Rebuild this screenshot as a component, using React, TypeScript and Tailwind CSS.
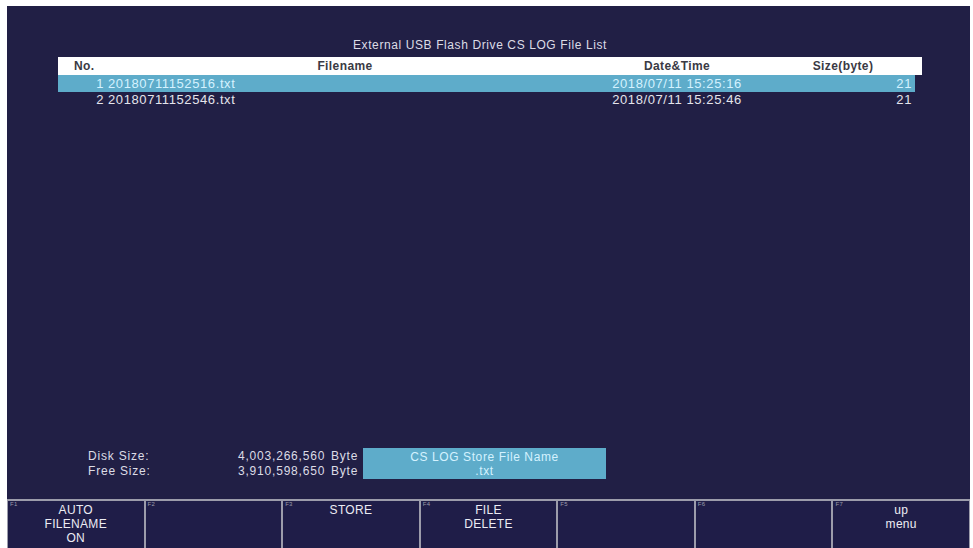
const files = [
  { no: 1, name: "20180711152516.txt", date: "2018/07/11 15:25:16", size: 21, selected: true },
  { no: 2, name: "20180711152546.txt", date: "2018/07/11 15:25:46", size: 21, selected: false },
];

const keys = [
  { f: "F1", label: ["AUTO", "FILENAME", "ON"] },
  { f: "F2", label: [] },
  { f: "F3", label: ["STORE"] },
  { f: "F4", label: ["FILE", "DELETE"] },
  { f: "F5", label: [] },
  { f: "F6", label: [] },
  { f: "F7", label: ["up", "menu"] },
];

function FileTable() {
  return (
    <div className="ml-[51px] w-[864px]">
      <div className="flex h-[18px] items-center bg-white text-[12px] font-bold tracking-[0.4px] text-[#3a3a44]">
        <div className="w-[80px] pl-[16px]">No.</div>
        <div className="w-[414px] text-center">Filename</div>
        <div className="w-[250px] text-center">Date&amp;Time</div>
        <div className="w-[82px] text-center">Size(byte)</div>
      </div>
      {files.map((f) => (
        <div
          key={f.no}
          className={
            f.selected
              ? "flex h-[17px] w-[857px] items-center bg-[#5eacca] text-[13px] tracking-[0.6px] text-[#d4f2ff]"
              : "flex h-[16px] w-[857px] items-center text-[13px] tracking-[0.6px] text-[#e4e4ec]"
          }
        >
          <div className="w-[46px] text-right">{f.no}</div>
          <div className="w-[448px] pl-[4px]">{f.name}</div>
          <div className="w-[250px] text-center">{f.date}</div>
          <div className="flex-1 pr-[3px] text-right">{f.size}</div>
        </div>
      ))}
    </div>
  );
}

function DiskInfo() {
  return (
    <div className="flex h-[31px] items-center text-[12px] tracking-[0.8px] text-[#dcdce6]">
      <div className="ml-[81px] flex w-[150px] flex-col leading-[15px]">
        <span>Disk Size:</span>
        <span>Free Size:</span>
      </div>
      <div className="flex w-[78px] flex-col text-right leading-[15px]">
        <span>4,003,266,560</span>
        <span>3,910,598,650</span>
      </div>
      <div className="ml-[15px] flex w-[32px] flex-col leading-[15px]">
        <span>Byte</span>
        <span>Byte</span>
      </div>
      <div className="flex h-[31px] w-[243px] flex-col items-center justify-center bg-[#5eacca] text-[12px] leading-[14px] tracking-[0.6px] text-[#d4f2ff]">
        <span>CS LOG Store File Name</span>
        <span>.txt</span>
      </div>
    </div>
  );
}

function KeyBar() {
  return (
    <div className="grid h-[49px] grid-cols-7 gap-x-[2px] bg-[#9c9cab] px-[1px] pt-[2px]">
      {keys.map((k) => (
        <div key={k.f} className="relative flex flex-col items-center bg-[#1f1d48] pt-[2px] text-[12px] leading-[14px] tracking-[0.3px] text-[#ececf4]">
          <span className="absolute left-[2px] top-[0px] text-[6px] leading-[7px] text-[#9c9cab]">{k.f}</span>
          {k.label.map((l) => (
            <span key={l}>{l}</span>
          ))}
        </div>
      ))}
    </div>
  );
}

export default function App() {
  return (
    <div
      className="h-[548px] w-[973px] bg-white pl-[7px] pr-[3px] pt-[6px]"
      style={{ fontFamily: '"Liberation Sans", Arial, sans-serif' }}
    >
      <div className="flex h-[542px] flex-col bg-[#211f45]">
        <div className="ml-[51px] mt-[32px] mb-[5px] h-[14px] w-[864px] pr-[20px] text-center text-[12px] leading-[14px] tracking-[0.6px] text-[#dcdce6]">
          External USB Flash Drive CS LOG File List
        </div>
        <FileTable />
        <div className="flex-1" />
        <DiskInfo />
        <div className="h-[20px]" />
        <KeyBar />
      </div>
    </div>
  );
}
